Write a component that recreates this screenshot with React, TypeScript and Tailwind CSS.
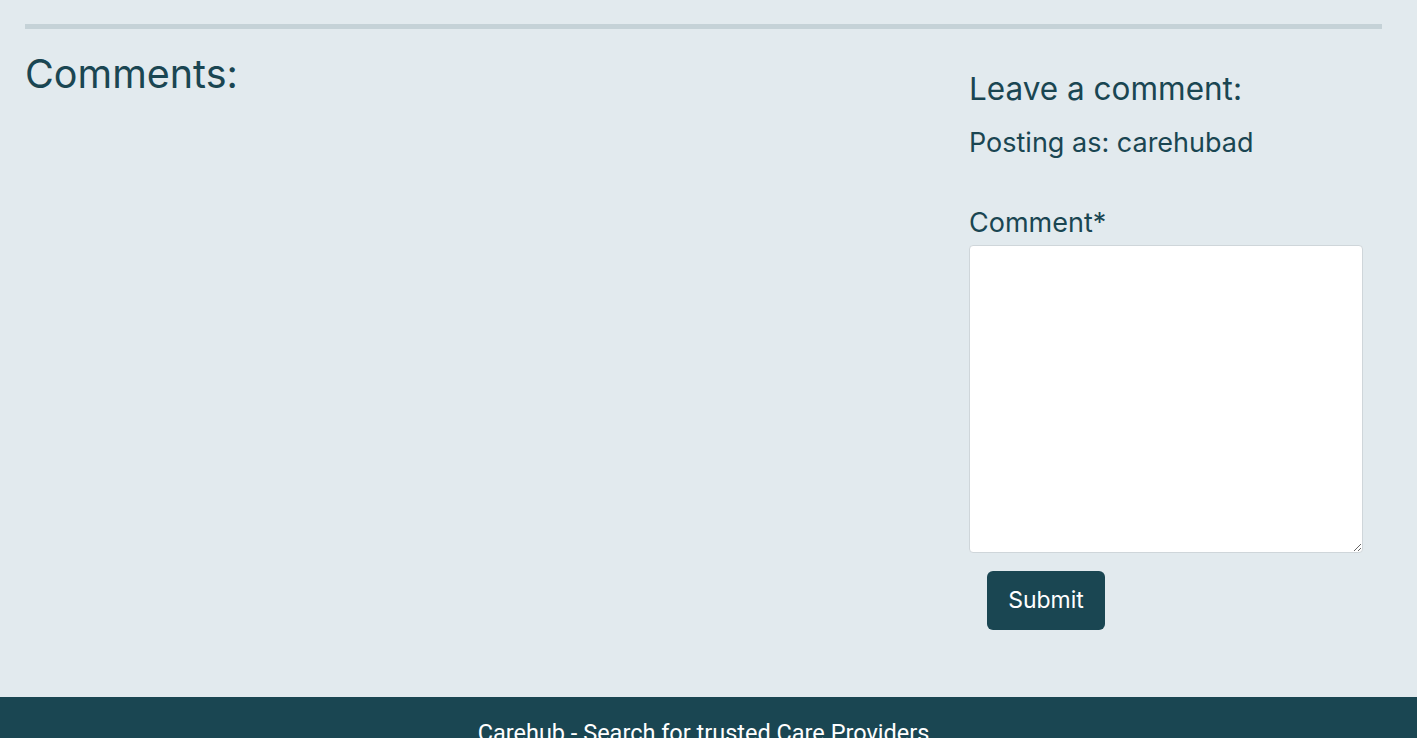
export default function App() {
  return (
    <div className="min-h-screen bg-[#e2eaee] text-[#1a4652] flex flex-col" style={{ fontFamily: "Inter, 'Liberation Sans', sans-serif" }}>
      <main className="px-[25px] pt-[24px] h-[697px] shrink-0">
        <hr className="border-0 h-[5px] bg-[#c5d2d7] mr-[10px]" />
        <div className="flex">
          {/* Comments list */}
          <div className="flex-1">
            <h2 className="text-[39.5px] leading-none mt-[26px]">Comments:</h2>
          </div>
          {/* Form */}
          <div className="w-[423px] pt-[44px]">
            <h3 className="text-[31.5px] leading-none">Leave a comment:</h3>
            <p className="text-[27px] leading-none mt-[24px]">Posting as: carehubad</p>
            <form className="mt-[53px]">
              <label className="block text-[27px] leading-none">Comment*</label>
              <textarea className="block mt-[9px] w-[394px] h-[308px] bg-white border border-[#cfd6da] rounded-[4px]" />
              <button type="button" className="ml-[18px] mt-[18px] w-[118px] h-[59px] rounded-[6px] bg-[#1a4652] text-white text-[23px]">
                Submit
              </button>
            </form>
          </div>
        </div>
      </main>
      <footer className="bg-[#1a4652] flex-1 flex justify-center pt-[25px] pr-[10px] pb-8">
        <p className="text-white text-[23.5px] leading-none" style={{ fontFamily: "Roboto, sans-serif" }}>
          Carehub - Search for trusted Care Providers
        </p>
      </footer>
    </div>
  );
}
